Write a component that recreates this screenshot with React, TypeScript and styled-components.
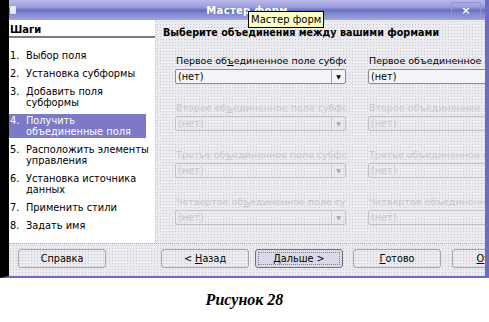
import React from "react";
import styled, { createGlobalStyle } from "styled-components";

const Global = createGlobalStyle`
	html, body {
		margin: 0;
		padding: 0;
		background: #ffffff;
	}
	body {
		width: 489px;
		height: 322px;
		overflow: hidden;
		font-family: "DejaVu Sans", "Liberation Sans", sans-serif;
	}
`;

const dots = `
	background-color: #ececf0;
	background-image: radial-gradient(#c8c8d0 0.6px, transparent 0.7px);
	background-size: 3px 3px;
`;

const Window = styled.div`
	position: relative;
	width: 489px;
	height: 278px;
	box-sizing: border-box;
	display: flex;
	flex-direction: column;
	border-left: 9px solid #000000;
	border-right: 4px solid #6c6cc4;
	border-bottom: 2px solid #6c6cc4;
	overflow: hidden;

	&::before {
		content: "";
		position: absolute;
		left: -9px;
		top: 0;
		width: 9px;
		height: 5px;
		background: #ffffff;
	}
`;

const TitleBar = styled.div`
	position: relative;
	height: 20px;
	flex: none;
	display: flex;
	align-items: center;
	justify-content: center;
	background: linear-gradient(
		#b8b8ea 0%,
		#9c9cde 35%,
		#6470bc 52%,
		#7c84cc 65%,
		#a4a4e0 100%
	);
	color: #ffffff;
	font-size: 10px;
	font-weight: bold;
	letter-spacing: 0.3px;
`;

const AppIcon = styled.div`
	position: absolute;
	left: 1px;
	top: 6px;
	width: 6px;
	height: 8px;
	background: #e8e8f8;
	border-radius: 1px;
`;

const Close = styled.div`
	position: absolute;
	right: 4px;
	top: 2px;
	width: 28px;
	height: 15px;
	display: flex;
	align-items: center;
	justify-content: center;
	border: 1px solid #9494d2;
	border-radius: 2px;
	font-size: 11px;
	font-weight: bold;
	color: #ffffff;
`;

const Tooltip = styled.div`
	position: absolute;
	left: 239px;
	top: 11px;
	height: 15px;
	padding: 0 2px;
	display: flex;
	align-items: center;
	background: #ffffc4;
	border: 1px solid #000000;
	color: #000000;
	font-size: 10px;
	font-weight: normal;
	letter-spacing: 0;
	z-index: 2;
`;

const Body = styled.div`
	flex: 1;
	display: flex;
	min-height: 0;
`;

const Steps = styled.div`
	width: 146px;
	flex: none;
	background: #ffffff;
	border-right: 1px dotted #b8b8c0;
	display: flex;
	flex-direction: column;
	overflow: hidden;
`;

const StepsHeader = styled.div`
	height: 18px;
	box-sizing: border-box;
	border-bottom: 2px solid #7c7c7c;
	font-size: 10px;
	font-weight: bold;
	color: #000000;
	display: flex;
	align-items: flex-end;
	padding: 0 0 1px 1px;
`;

const StepList = styled.div`
	display: flex;
	flex-direction: column;
	gap: 7px;
	padding-top: 12px;
	margin-right: 9px;
`;

const Step = styled.div<{ $active?: boolean }>`
	display: grid;
	grid-template-columns: 16px 1fr;
	font-size: 9.8px;
	line-height: 11px;
	padding: ${(p) => (p.$active ? "1px 0 1px 1px" : "0 0 0 1px")};
	margin: ${(p) => (p.$active ? "-1px 0" : "0")};
	white-space: nowrap;
	color: ${(p) => (p.$active ? "#ffffff" : "#000000")};
	background: ${(p) => (p.$active ? "#7a7ac6" : "transparent")};
`;

const StepText = styled.span`
	display: flex;
	flex-direction: column;
`;

const Main = styled.div`
	flex: 1;
	${dots}
	padding: 7px 0 0 7px;
	overflow: hidden;
`;

const Heading = styled.div`
	font-size: 9.6px;
	line-height: 12px;
	font-weight: bold;
	color: #000000;
	white-space: nowrap;
`;

const Grid = styled.div`
	display: grid;
	grid-template-columns: 171px 171px;
	column-gap: 22px;
	row-gap: 18px;
	margin: 16px 0 0 12px;
`;

const Field = styled.div`
	display: flex;
	flex-direction: column;
	gap: 2px;
	min-width: 0;
`;

const Label = styled.div<{ $disabled?: boolean }>`
	font-size: 9.5px;
	line-height: 12px;
	padding-left: 1px;
	white-space: nowrap;
	overflow: hidden;
	color: ${(p) => (p.$disabled ? "#c6c6ce" : "#000000")};
	u {
		text-decoration: underline;
	}
`;

const Select = styled.div<{ $disabled?: boolean }>`
	height: 15px;
	box-sizing: border-box;
	display: flex;
	border: 1px solid ${(p) => (p.$disabled ? "#c2c2ca" : "#8c8c94")};
	border-radius: 2px;
	background: ${(p) => (p.$disabled ? "transparent" : "#f4f4f6")};
	font-size: 9.7px;
	color: ${(p) => (p.$disabled ? "#c6c6ce" : "#000000")};
`;

const SelectValue = styled.div`
	flex: 1;
	padding-left: 2px;
	display: flex;
	align-items: center;
`;

const Arrow = styled.div<{ $disabled?: boolean }>`
	width: 13px;
	flex: none;
	border-left: 1px solid ${(p) => (p.$disabled ? "#c8c8d0" : "#a0a0a8")};
	display: flex;
	align-items: center;
	justify-content: center;
	font-size: 6px;
	color: ${(p) => (p.$disabled ? "#a8a8b0" : "#000000")};
`;

const Footer = styled.div`
	flex: none;
	height: 33px;
	box-sizing: border-box;
	${dots}
	border-top: 1px dotted #a8a8b0;
	display: flex;
	align-items: center;
	padding: 0 0 3px 9px;
	overflow: hidden;
`;

const Button = styled.div<{ $focus?: boolean; $gapLeft?: number }>`
	width: 88px;
	height: 19px;
	flex: none;
	box-sizing: border-box;
	display: flex;
	align-items: center;
	justify-content: center;
	margin-left: ${(p) => p.$gapLeft ?? 0}px;
	border: 1px solid ${(p) => (p.$focus ? "#70707e" : "#a4a4ac")};
	border-radius: 3px;
	background: ${(p) => (p.$focus ? "#dadae6" : "transparent")};
	outline: ${(p) => (p.$focus ? "1px dotted #8080a0" : "none")};
	outline-offset: -4px;
	font-size: 9.7px;
	color: #000000;
	u {
		text-decoration: underline;
	}
`;

const Caption = styled.div`
	height: 44px;
	display: flex;
	align-items: center;
	justify-content: center;
	font-family: "Liberation Serif", serif;
	font-style: italic;
	font-weight: bold;
	font-size: 16px;
`;

const steps: { n: string; lines: string[]; active?: boolean }[] = [
	{ n: "1.", lines: ["Выбор поля"] },
	{ n: "2.", lines: ["Установка субформы"] },
	{ n: "3.", lines: ["Добавить поля", "субформы"] },
	{ n: "4.", lines: ["Получить", "объединенные поля"], active: true },
	{ n: "5.", lines: ["Расположить элементы", "управления"] },
	{ n: "6.", lines: ["Установка источника", "данных"] },
	{ n: "7.", lines: ["Применить стили"] },
	{ n: "8.", lines: ["Задать имя"] },
];

const ordinals = ["Первое", "Второе", "Третье", "Четвертое"];

const App: React.FC = () => {
	return (
		<>
			<Global />
			<Window>
				<TitleBar>
					<AppIcon />
					Мастер форм
					<Close>×</Close>
					<Tooltip>Мастер форм</Tooltip>
				</TitleBar>
				<Body>
					<Steps>
						<StepsHeader>Шаги</StepsHeader>
						<StepList>
							{steps.map((s) => (
								<Step key={s.n} $active={s.active}>
									<span>{s.n}</span>
									<StepText>
										{s.lines.map((l) => (
											<span key={l}>{l}</span>
										))}
									</StepText>
								</Step>
							))}
						</StepList>
					</Steps>
					<Main>
						<Heading>Выберите объединения между вашими формами</Heading>
						<Grid>
							{ordinals.map((o, i) =>
								[0, 1].map((col) => (
									<Field key={o + col}>
										<Label $disabled={i > 0}>
											{o} об{col === 0 ? <u>ъ</u> : "ъ"}единенное поле{" "}
											{col === 0 ? "субформы" : "основной формы"}
										</Label>
										<Select $disabled={i > 0}>
											<SelectValue>(нет)</SelectValue>
											<Arrow $disabled={i > 0}>▼</Arrow>
										</Select>
									</Field>
								))
							)}
						</Grid>
					</Main>
				</Body>
				<Footer>
					<Button>Справка</Button>
					<Button $gapLeft={55}>
						&lt;&nbsp;<u>Н</u>азад
					</Button>
					<Button $gapLeft={6} $focus>
						Дальше &gt;
					</Button>
					<Button $gapLeft={10}>
						<u>Г</u>отово
					</Button>
					<Button $gapLeft={11}>
						<u>О</u>тмена
					</Button>
				</Footer>
			</Window>
			<Caption>Рисунок 28</Caption>
		</>
	);
};

export default App;
